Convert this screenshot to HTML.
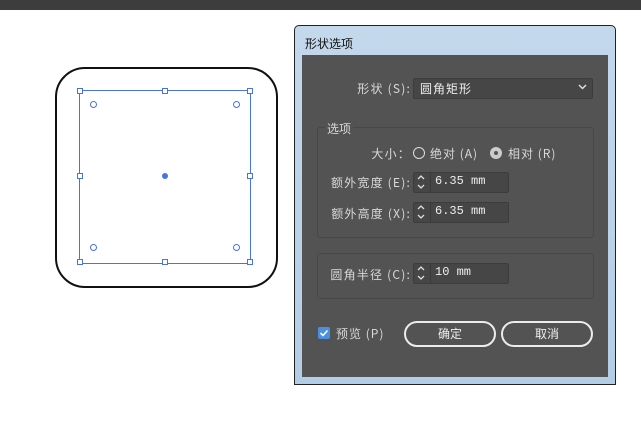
<!DOCTYPE html><html><head><meta charset="utf-8"><style>
body{margin:0;width:641px;height:430px;background:#fff;position:relative;overflow:hidden;font-family:"Liberation Sans","Noto Sans CJK SC",sans-serif}
.a{position:absolute}
.t{color:#d8d8d8;font-size:12px;font-family:"Noto Sans CJK SC",sans-serif;white-space:nowrap}
.r{text-align:right;letter-spacing:1.2px}
.in{background:#464646;border:1px solid #3c3c3c;border-radius:2px}
.num{color:#eee;font-family:"Liberation Mono",monospace;font-size:12px}
.h{width:4px;height:4px;border:1px solid #4a72e0;background:#fff}
.btn{border:2px solid #ececec;border-radius:13px;color:#eee;font-size:12px;text-align:center;line-height:22px;font-family:"Noto Sans CJK SC",sans-serif}
</style></head><body>
<div class="a" style="left:0;top:0;width:641px;height:10px;background:#3d3d3d"></div>
<div class="a" style="left:55px;top:67px;width:219px;height:217px;border:2px solid #111;border-radius:30px"></div>
<div class="a" style="left:79px;top:90px;width:170px;height:172px;border:1px solid #4a72e0"></div>
<div class="a h" style="left:77px;top:88px"></div><div class="a h" style="left:162px;top:88px"></div><div class="a h" style="left:247px;top:88px"></div>
<div class="a h" style="left:77px;top:173px"></div><div class="a h" style="left:247px;top:173px"></div>
<div class="a h" style="left:77px;top:259px"></div><div class="a h" style="left:162px;top:259px"></div><div class="a h" style="left:247px;top:259px"></div>
<div class="a" style="left:162px;top:173px;width:6px;height:6px;border-radius:50%;background:#4a72e0"></div>
<div class="a" style="left:90px;top:101px;width:5px;height:5px;border:1px solid #4a72e0;border-radius:50%"></div>
<div class="a" style="left:233px;top:101px;width:5px;height:5px;border:1px solid #4a72e0;border-radius:50%"></div>
<div class="a" style="left:90px;top:244px;width:5px;height:5px;border:1px solid #4a72e0;border-radius:50%"></div>
<div class="a" style="left:233px;top:244px;width:5px;height:5px;border:1px solid #4a72e0;border-radius:50%"></div>
<div class="a" style="left:294px;top:25px;width:320px;height:358px;border:1px solid #222;border-radius:5px 5px 0 0;background:linear-gradient(#c4d8ec,#b4cde6)"></div>
<div class="a" style="left:305px;top:35px;font-size:12px;color:#111;font-family:'Noto Sans CJK SC',sans-serif">形状选项</div>
<div class="a" style="left:302px;top:55px;width:306px;height:322px;background:#535353"></div>
<div class="a t r" style="left:300px;width:111px;top:80px">形状 (S):</div>
<div class="a in" style="left:413px;top:78px;width:178px;height:19px"></div>
<div class="a" style="left:420px;top:80px;color:#eee;font-size:12px;font-family:'Noto Sans CJK SC',sans-serif;letter-spacing:1px">圆角矩形</div>
<svg class="a" style="left:578px;top:84px" width="9" height="6"><path d="M1 1L4.5 4.5L8 1" stroke="#ddd" stroke-width="1.5" fill="none"/></svg>
<div class="a" style="left:317px;top:127px;width:275px;height:109px;border:1px solid #484848;border-radius:3px"></div>
<div class="a t" style="left:325px;top:120px;background:#535353;padding:0 2px">选项</div>
<div class="a t r" style="left:340px;width:71px;top:145px">大小：</div>
<div class="a" style="left:413px;top:147px;width:10px;height:10px;border:1px solid #ddd;border-radius:50%"></div>
<div class="a t" style="left:430px;top:145px;letter-spacing:1px">绝对 (A)</div>
<div class="a" style="left:490px;top:147px;width:12px;height:12px;background:#ccc;border-radius:50%"></div>
<div class="a" style="left:494px;top:151px;width:4px;height:4px;background:#555;border-radius:50%"></div>
<div class="a t" style="left:508px;top:145px;letter-spacing:1px">相对 (R)</div>
<div class="a t r" style="left:300px;width:111px;top:174px">额外宽度 (E):</div>
<div class="a in" style="left:413px;top:172px;width:94px;height:19px"></div>
<div class="a" style="left:430px;top:172px;width:1px;height:20px;background:#3a3a3a"></div>
<svg class="a" style="left:416px;top:174px" width="10" height="16"><path d="M2 5L5 2L8 5M2 11L5 14L8 11" stroke="#ddd" stroke-width="1.3" fill="none"/></svg>
<div class="a num" style="left:435px;top:174px">6.35 mm</div>
<div class="a t r" style="left:300px;width:111px;top:205px">额外高度 (X):</div>
<div class="a in" style="left:413px;top:202px;width:94px;height:19px"></div>
<div class="a" style="left:430px;top:202px;width:1px;height:20px;background:#3a3a3a"></div>
<svg class="a" style="left:416px;top:204px" width="10" height="16"><path d="M2 5L5 2L8 5M2 11L5 14L8 11" stroke="#ddd" stroke-width="1.3" fill="none"/></svg>
<div class="a num" style="left:435px;top:204px">6.35 mm</div>
<div class="a" style="left:317px;top:253px;width:275px;height:44px;border:1px solid #484848;border-radius:3px"></div>
<div class="a t r" style="left:300px;width:111px;top:266px">圆角半径 (C):</div>
<div class="a in" style="left:413px;top:263px;width:94px;height:19px"></div>
<div class="a" style="left:430px;top:263px;width:1px;height:20px;background:#3a3a3a"></div>
<svg class="a" style="left:416px;top:265px" width="10" height="16"><path d="M2 5L5 2L8 5M2 11L5 14L8 11" stroke="#ddd" stroke-width="1.3" fill="none"/></svg>
<div class="a num" style="left:435px;top:265px">10 mm</div>
<div class="a" style="left:318px;top:327px;width:12px;height:12px;background:#4b8fe0;border-radius:2px"></div>
<svg class="a" style="left:318px;top:327px" width="12" height="12"><path d="M2.5 6L5 8.5L9.5 3.5" stroke="#fff" stroke-width="1.6" fill="none"/></svg>
<div class="a t" style="left:336px;top:325px;letter-spacing:1px">预览 (P)</div>
<div class="a btn" style="left:404px;top:321px;width:88px;height:22px">确定</div>
<div class="a btn" style="left:501px;top:321px;width:88px;height:22px">取消</div>
</body></html>
